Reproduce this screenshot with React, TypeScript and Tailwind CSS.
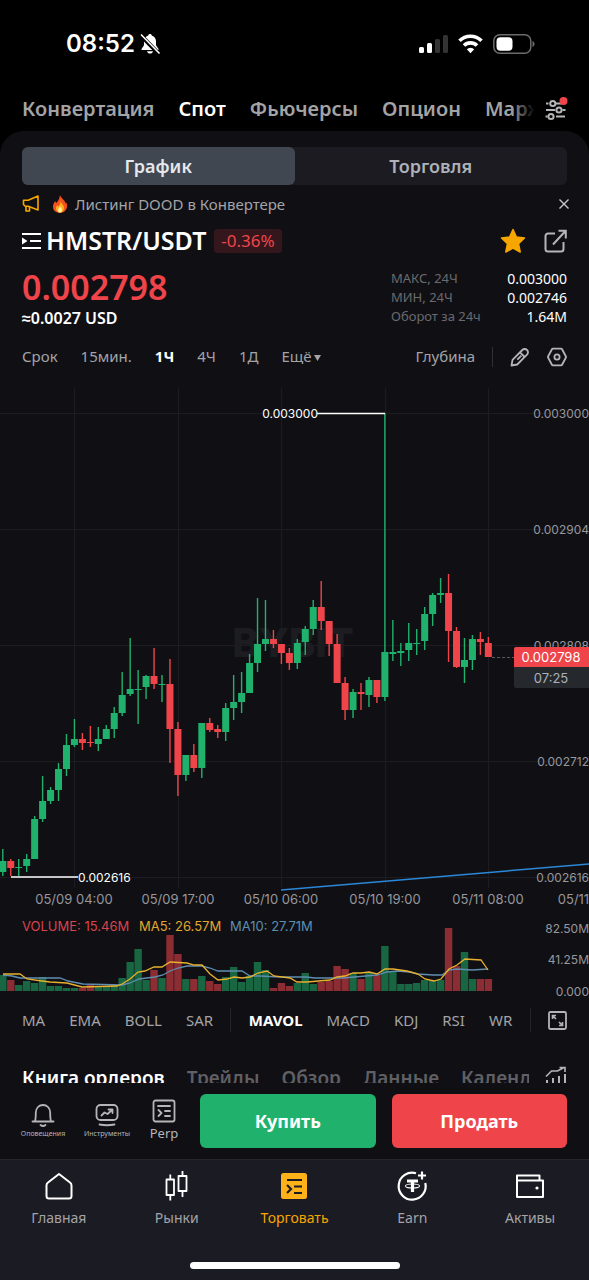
import type { ReactNode } from "react";

type Candle = {
  up: boolean;
  // top and bottom of the body, then top and bottom of the wick
  body: [number, number];
  wick: [number, number];
  volume: number;
};

const c = (side: "g" | "r", top: number, bottom: number, high: number, low: number, volume: number): Candle => ({
  up: side === "g",
  body: [top, bottom],
  wick: [high, low],
  volume,
});

const candles: Candle[] = [
  c("g", 861, 872, 849, 876, 16),
  c("r", 861, 868, 859, 876, 11),
  c("g", 867, 868, 859, 876, 6),
  c("g", 859, 866, 854, 872, 10),
  c("g", 819, 859, 816, 859, 8),
  c("g", 801, 819, 776, 822, 14),
  c("g", 790, 801, 787, 804, 5),
  c("g", 769, 790, 763, 801, 5),
  c("g", 745, 769, 734, 776, 3),
  c("g", 739, 745, 719, 747, 3),
  c("r", 739, 743, 733, 750, 3),
  c("r", 742, 743, 726, 747, 6),
  c("g", 739, 744, 727, 751, 5),
  c("g", 729, 739, 725, 739, 5),
  c("g", 713, 729, 707, 738, 6),
  c("g", 695, 713, 672, 716, 13),
  c("g", 689, 694, 638, 696, 29),
  c("g", 689, 690, 670, 724, 42),
  c("g", 676, 687, 675, 699, 11),
  c("r", 676, 684, 648, 689, 21),
  c("g", 684, 685, 675, 702, 13),
  c("r", 684, 729, 659, 763, 56),
  c("r", 729, 775, 722, 796, 37),
  c("g", 755, 775, 755, 781, 12),
  c("r", 755, 768, 744, 772, 12),
  c("g", 723, 768, 723, 778, 15),
  c("r", 723, 730, 718, 732, 10),
  c("r", 729, 732, 725, 738, 7),
  c("g", 708, 732, 703, 741, 14),
  c("g", 702, 708, 675, 720, 24),
  c("g", 693, 702, 672, 713, 9),
  c("g", 663, 693, 654, 693, 15),
  c("g", 644, 663, 598, 672, 29),
  c("g", 639, 644, 600, 651, 21),
  c("r", 639, 644, 630, 648, 3),
  c("r", 644, 653, 644, 664, 8),
  c("r", 653, 663, 648, 670, 5),
  c("g", 643, 663, 639, 669, 8),
  c("g", 629, 642, 626, 655, 18),
  c("g", 607, 629, 600, 635, 7),
  c("r", 607, 621, 581, 630, 9),
  c("r", 621, 644, 621, 656, 10),
  c("r", 644, 683, 634, 683, 25),
  c("r", 683, 710, 677, 720, 22),
  c("g", 692, 710, 689, 718, 18),
  c("r", 692, 694, 683, 710, 12),
  c("g", 680, 695, 677, 707, 18),
  c("r", 680, 697, 680, 703, 16),
  c("g", 652, 697, 413, 701, 45),
  c("g", 652, 654, 620, 661, 19),
  c("g", 651, 653, 643, 666, 7),
  c("g", 643, 650, 623, 661, 7),
  c("g", 643, 644, 629, 655, 8),
  c("g", 614, 641, 607, 650, 11),
  c("g", 595, 614, 593, 626, 11),
  c("g", 593, 595, 578, 603, 11),
  c("r", 593, 631, 574, 662, 63),
  c("r", 631, 667, 627, 668, 25),
  c("g", 660, 667, 638, 683, 39),
  c("g", 639, 660, 635, 670, 12),
  c("r", 639, 642, 632, 655, 12),
  c("r", 643, 657, 637, 657, 12),
];

const candleX = (index: number) => 2.8 + index * 7.96;

const priceLines = [
  { y: 413, label: "0.003000" },
  { y: 529, label: "0.002904" },
  { y: 645, label: "0.002808" },
  { y: 761, label: "0.002712" },
  { y: 877, label: "0.002616" },
];

const timeLines = [
  { x: 74, label: "05/09 04:00" },
  { x: 178, label: "05/09 17:00" },
  { x: 281, label: "05/10 06:00" },
  { x: 385, label: "05/10 19:00" },
  { x: 488, label: "05/11 08:00" },
];

const ma5 =
  "3,974 20,974 27,979 42,981 50,982 67,983 82,987 117,986 122,984 130,979 138,972 145,971 154,967 162,967 170,962 187,963 194,965 202,965 210,974 218,980 227,979 234,977 242,978 250,977 258,973 267,971 274,976 290,978 297,982 307,982 330,980 337,977 345,976 353,973 361,973 369,972 377,974 385,969 393,969 407,971 418,974 425,979 434,981 441,979 449,969 457,965 465,959 481,960 488,970";
const ma10 =
  "3,975 12,976 20,978 60,978 68,981 83,984 122,985 130,983 139,979 155,977 163,975 170,971 178,968 187,966 202,966 210,968 218,971 242,971 250,976 260,976 280,977 306,977 315,978 343,978 377,975 387,972 397,971 410,972 418,974 433,975 442,975 449,970 457,969 472,970 488,969";

const marketTabs = ["Конвертация", "Спот", "Фьючерсы", "Опцион", "Маржа"];
const intervals = ["Срок", "15мин.", "1Ч", "4Ч", "1Д"];
const overlays = ["MA", "EMA", "BOLL", "SAR"];
const oscillators = ["MAVOL", "MACD", "KDJ", "RSI", "WR"];
const infoTabs = ["Книга ордеров", "Трейды", "Обзор", "Данные", "Календарь"];

const stats = [
  { label: "МАКС, 24Ч", value: "0.003000" },
  { label: "МИН, 24Ч", value: "0.002746" },
  { label: "Оборот за 24ч", value: "1.64M" },
];

function StatusBar() {
  return (
    <div className="flex h-[88px] items-center justify-between pr-[54px] pl-[66px] text-white">
      <div className="flex items-center gap-1 font-['Inter'] text-2xl font-semibold">
        08:52
        <svg width="22" height="22" viewBox="0 0 22 22" fill="currentColor">
          <path d="M11 1c-1 0-1.700.7-1.800 1.500C6.500 3.400 5 5.700 5 8.500v3.800L2.500 16v1h17v-1L17 12.300V8.500c0-2.800-1.500-5.100-4.200-6C12.700 1.700 12 1 11 1z" />
          <path d="M8 18.200h6c-.4 1.500-1.500 2.400-3 2.400s-2.600-.9-3-2.400z" />
          <path d="M2 2.500 19 20" stroke="#000" strokeWidth="4" />
          <path d="M2 1.500 20.500 20.500" stroke="currentColor" strokeWidth="1.600" />
        </svg>
      </div>
      <div className="flex items-center gap-[10px]">
        <svg width="29" height="20" viewBox="0 0 29 20">
          <rect x="0" y="13" width="5" height="6" rx="1.500" fill="#fff" />
          <rect x="8" y="9" width="5" height="10" rx="1.500" fill="#fff" />
          <rect x="16" y="5" width="5" height="14" rx="1.500" fill="#333" />
          <rect x="24" y="1" width="5" height="18" rx="1.500" fill="#333" />
        </svg>
        <svg width="25" height="20" viewBox="0 0 25 20" fill="none" stroke="#fff" strokeWidth="3.600">
          <path d="M1.500 6.800a15.500 15.500 0 0 1 22 0" />
          <path d="M6 11.600a9.200 9.200 0 0 1 13 0" />
          <path d="M12.500 19.200 8.800 15.300a5.300 5.300 0 0 1 7.400 0z" fill="#fff" stroke="none" />
        </svg>
        <svg width="42" height="20" viewBox="0 0 42 20">
          <rect x=".8" y=".8" width="37" height="18.400" rx="6" fill="none" stroke="#6b6b6b" strokeWidth="1.500" />
          <rect x="3.500" y="3.200" width="16" height="13.600" rx="4" fill="#fff" />
          <path d="M39.500 7v6c1.300-.5 2-1.700 2-3s-.7-2.500-2-3z" fill="#6b6b6b" />
        </svg>
      </div>
    </div>
  );
}

function MarketNav() {
  return (
    <nav className="flex h-[43px] items-center pr-[18px] pb-0.5 pl-[22px]">
      <div className="relative flex min-w-0 flex-1 gap-6 overflow-hidden text-xl leading-8 font-semibold text-[#a3a3a6]">
        {marketTabs.map((tab) => (
          <a key={tab} href="#" className={tab === "Спот" ? "text-white" : ""}>
            {tab}
          </a>
        ))}
        <span className="absolute inset-y-0 right-0 w-6 bg-gradient-to-r from-transparent to-black" />
      </div>
      <button type="button" aria-label="Настройки" className="ml-2">
        <svg width="28" height="28" viewBox="0 0 28 28" fill="none" stroke="#b5b5b8" strokeWidth="2">
          <path d="M3 8.500h2.500M13 8.500h6M3 15h9M19.500 15h3M2.500 21.500h2M13 21.500h9M7.500 5h.1" />
          <circle cx="9.800" cy="8.500" r="2.600" />
          <circle cx="16" cy="15" r="2.600" />
          <circle cx="8" cy="21.500" r="2.600" />
          <circle cx="20.500" cy="6" r="4" fill="#ef454a" stroke="none" />
        </svg>
      </button>
    </nav>
  );
}

function PairHeader() {
  return (
    <section className="px-[22px]">
      <div className="flex h-[38px] items-center">
        <svg width="18" height="19" viewBox="0 0 18 19" fill="none" stroke="#f7a600" strokeWidth="1.600" strokeLinejoin="round">
          <path d="M1.500 5.200h4.700L16 1v14l-9.800-3.800H3.200L1.500 9.500z" />
          <path d="M4 11.500V16h3.500v-4" />
        </svg>
        <svg width="16" height="20" viewBox="0 0 16 20" className="ml-3">
          <path d="M8 1c.5 3 5 5 5.700 8.500l.8-1c1.800 5.500-1 10.300-6.500 10.300S.3 15 1.200 11c.4-1.800 1.500-2.800 1.800-4l1.300 2C6 7 7.500 5 8 1z" fill="#f4511e" />
          <path d="M8.500 7.500c1 2 3.500 3.500 3.500 6.500 0 2.700-1.700 4.500-4 4.500S4 16.800 4 14.300c0-1.500.8-2.300 1.300-3l1 1.200c1.300-1.200 2-2.500 2.200-5z" fill="#ffb020" />
          <path d="M8 12.500c1 1 2 2 2 3.500 0 1.600-.8 2.500-2 2.500s-2-.9-2-2.300c0-1.300 1.300-2 2-3.700z" fill="#fff0a0" />
        </svg>
        <p className="ml-[7px] flex-1 text-[15px] text-[#a3a3a8]">Листинг DOOD в Конвертере</p>
        <button type="button" aria-label="Закрыть" className="-mr-0.5">
          <svg width="10" height="10" viewBox="0 0 10 10" stroke="#c8c8cc" strokeWidth="1.400">
            <path d="M.5.500l9 9M9.500.500l-9 9" />
          </svg>
        </button>
      </div>

      <div className="flex h-9 items-center">
        <svg width="20" height="20" viewBox="0 0 20 20" fill="none" stroke="#fff" strokeWidth="2.200">
          <path d="M0 3h19M8 10h11M0 17h19" />
          <path d="M0 6.500v7L5.500 10z" fill="#fff" stroke="none" />
        </svg>
        <h1 className="ml-1 text-[25px] font-semibold text-white">HMSTR/USDT</h1>
        <span className="ml-2 rounded bg-[#34161d] px-[7px] text-[17px] leading-6 text-[#ef454a]">-0.36%</span>
        <div className="ml-auto flex items-center gap-[18px]">
          <button type="button" aria-label="В избранном">
            <svg width="26" height="26" viewBox="0 0 26 26" fill="#f7a600" stroke="#f7a600" strokeWidth="1.500" strokeLinejoin="round">
              <path d="m13 1.500 3.400 7.600 8.100.9-6 5.600 1.700 8.400L13 20l-7.200 4 1.700-8.400-6-5.600 8.100-.9z" />
            </svg>
          </button>
          <button type="button" aria-label="Поделиться">
            <svg width="23" height="24" viewBox="0 0 23 24" fill="none" stroke="#b5b5b8" strokeWidth="2">
              <path d="M11 4.500H4A2.500 2.500 0 0 0 1.500 7v13A2.500 2.500 0 0 0 4 22.500h13a2.500 2.500 0 0 0 2.500-2.500v-7" />
              <path d="M9 15.500 21 2.500M14.500 1.800h7.300v7.700" />
            </svg>
          </button>
        </div>
      </div>

      <div className="mt-2 flex justify-between">
        <div>
          <p className="text-[34px] leading-10 font-semibold text-[#ef454a]">0.002798</p>
          <p className="text-base leading-[22px] font-semibold text-white">≈0.0027 USD</p>
        </div>
        <dl className="w-44 pt-0.5 text-[13px] leading-[19px]">
          {stats.map((stat) => (
            <div key={stat.label} className="flex justify-between">
              <dt className="text-[#6a6a6e]">{stat.label}</dt>
              <dd className="text-sm leading-[19px] text-white">{stat.value}</dd>
            </div>
          ))}
        </dl>
      </div>
    </section>
  );
}

function IntervalBar() {
  return (
    <div className="mt-2 flex h-[39px] items-center gap-[23px] px-[22px] text-[15px] text-[#a3a3a8]">
      {intervals.map((interval) => (
        <button key={interval} type="button" className={interval === "1Ч" ? "font-bold text-white" : ""}>
          {interval}
        </button>
      ))}
      <button type="button" className="flex items-center gap-[3px]">
        Ещё
        <svg width="7" height="6" viewBox="0 0 7 6" fill="currentColor" className="mt-0.5">
          <path d="M0 0h7L3.500 6z" />
        </svg>
      </button>
      <div className="ml-auto flex items-center gap-[17px]">
        <button type="button">Глубина</button>
        <span className="h-5 w-px bg-[#303036]" />
        <button type="button" aria-label="Рисовать">
          <svg width="20" height="20" viewBox="0 0 20 20" fill="none" stroke="#b5b5b8" strokeWidth="1.800" strokeLinejoin="round">
            <path d="M1.500 18.500 2.500 12.800 12.300 3a3.300 3.300 0 0 1 4.700 0 3.300 3.300 0 0 1 0 4.700L7.200 17.500z" />
            <path d="M10 5.300 14.700 10M11.300 8.700l-4 4" />
          </svg>
        </button>
        <button type="button" aria-label="Настройки графика">
          <svg width="20" height="20" viewBox="0 0 20 20" fill="none" stroke="#b5b5b8" strokeWidth="1.800" strokeLinejoin="round">
            <path d="M6 1.700h8q.8 0 1.200.8l3.600 6.700q.4.800 0 1.600l-3.600 6.700q-.4.800-1.200.800H6q-.8 0-1.200-.8L1.200 10.800q-.4-.8 0-1.600l3.600-6.700q.4-.8 1.200-.8z" />
            <circle cx="10" cy="10" r="2.600" />
          </svg>
        </button>
      </div>
    </div>
  );
}

function PriceChart() {
  return (
    <svg viewBox="0 376 589 624" className="block w-full font-['Inter'] text-[13px]">
      <g stroke="#1c1c21">
        {priceLines.map((line) => (
          <path key={line.label} d={`M0 ${line.y + 0.5}H589`} />
        ))}
        {timeLines.map((line) => (
          <path key={line.label} d={`M${line.x + 0.5} 388V888`} />
        ))}
      </g>
      <text x="293" y="657" textAnchor="middle" fill="#1c1c21" className="text-[40px] font-extrabold">
        BYBIT
      </text>

      <g fill="#97979c" textAnchor="end" className="text-xs">
        {priceLines.map((line) => (
          <text key={line.label} x="589" y={line.y + 5}>
            {line.label}
          </text>
        ))}
        <text x="589" y="933">82.50M</text>
        <text x="589" y="964">41.25M</text>
        <text x="589" y="996">0.000</text>
      </g>

      {candles.map((candle, i) => {
        const x = candleX(i);
        return (
          <g key={i} fill={candle.up ? "#20b26c" : "#ef454a"}>
            <rect x={x - 0.7} y={candle.wick[0]} width="1.400" height={candle.wick[1] - candle.wick[0]} />
            <rect x={x - 3.5} y={candle.body[0]} width="7" height={candle.body[1] - candle.body[0]} />
            <rect x={x - 3.7} y={991 - candle.volume} width="7.400" height={candle.volume} fill={candle.up ? "#196742" : "#8b2d33"} />
          </g>
        );
      })}

      <path d="M317 413.500h68M11 877h67" stroke="#fff" strokeWidth="1.500" />
      <g fill="#fff" className="text-xs">
        <text x="318" y="418" textAnchor="end">0.003000</text>
        <text x="78" y="882">0.002616</text>
      </g>
      <path d="M281 890 589 864" stroke="#2b87d8" strokeWidth="1.500" />

      <path d="M492 657.500h22" stroke="#5a5a5f" strokeDasharray="3 2" />
      <path d="M514 649q0-2 2-2h73v20h-75z" fill="#ef454a" />
      <path d="M514 667h75v21h-73q-2 0-2-2z" fill="#25282c" />
      <g textAnchor="middle">
        <text x="551" y="662" fill="#fff">0.002798</text>
        <text x="551" y="683" fill="#adb1b8">07:25</text>
      </g>

      <g fill="#97979c" textAnchor="middle">
        {timeLines.map((line) => (
          <text key={line.label} x={line.x} y="904">
            {line.label}
          </text>
        ))}
        <text x="592" y="904">05/11 21:00</text>
      </g>

      <text x="22" y="931" fill="#d8434c">VOLUME: 15.46M</text>
      <text x="139" y="931" fill="#e0a82e">MA5: 26.57M</text>
      <text x="230" y="931" fill="#5b8fb0">MA10: 27.71M</text>
      <polyline points={ma10} fill="none" stroke="#5f8db0" strokeWidth="1.300" />
      <polyline points={ma5} fill="none" stroke="#e8b02e" strokeWidth="1.300" />
    </svg>
  );
}

function IndicatorBar() {
  return (
    <div className="flex h-10 items-center justify-between px-[22px] text-[15px] text-[#a3a3a8]">
      <div className="flex gap-6">
        {overlays.map((name) => (
          <button key={name} type="button">
            {name}
          </button>
        ))}
      </div>
      <span className="h-6 w-px bg-[#24242a]" />
      <div className="flex gap-6">
        {oscillators.map((name) => (
          <button key={name} type="button" className={name === "MAVOL" ? "font-bold text-white" : ""}>
            {name}
          </button>
        ))}
      </div>
      <span className="h-6 w-px bg-[#24242a]" />
      <button type="button" aria-label="На весь экран">
        <svg width="19" height="19" viewBox="0 0 19 19" fill="none" stroke="#b5b5b8" strokeWidth="1.800">
          <rect x="1" y="1" width="17" height="17" rx="1.500" />
          <path d="M4.500 8V4.500H8M4.500 4.500 8 8M14.500 11v3.500H11M14.500 14.500 11 11" strokeWidth="1.600" />
        </svg>
      </button>
    </div>
  );
}

function InfoTabs() {
  return (
    <div className="mt-5 flex h-[23px] items-start overflow-hidden px-[22px]">
      <div className="flex min-w-0 flex-1 gap-[22px] overflow-hidden text-[19px] leading-9 font-semibold whitespace-nowrap text-[#5f5f64]">
        {infoTabs.map((tab, i) => (
          <a key={tab} href="#" className={i === 0 ? "text-white" : ""}>
            {tab}
          </a>
        ))}
      </div>
      <svg width="22" height="17" viewBox="0 0 22 17" fill="none" stroke="#b5b5b8" strokeWidth="2" className="mt-[6px] ml-4">
        <path d="M1 10.500 6.500 5h6L19 1.500M14.500 1.500H20V6" strokeWidth="1.600" />
        <path d="M2 14v3M8 12v5M14 10v7M20 8v9" />
      </svg>
    </div>
  );
}

function Shortcut({ label, className, children }: { label: string; className: string; children: ReactNode }) {
  return (
    <button type="button" className={`flex flex-col items-center text-[#b5b5b8] ${className}`}>
      <svg width="24" height="24" viewBox="0 0 24 24" fill="none" stroke="currentColor" strokeWidth="1.800" strokeLinecap="round" strokeLinejoin="round">
        {children}
      </svg>
      {label}
    </button>
  );
}

function TradeBar() {
  return (
    <div className="mt-[11px] flex h-[54px] items-center gap-4 px-[22px]">
      <div className="mr-[6px] flex gap-[22px]">
        <Shortcut label="Оповещения" className="w-[42px] pt-1 text-[7px] leading-[14px]">
          <path d="M1.500 18.500h21M4 18c.8-2 .8-4 .8-8.500C5 5 8 2 12 2s7 3 7.200 7.500c0 4.500 0 6.500.8 8.500M9.500 22q2.500 2 5 0" />
        </Shortcut>
        <Shortcut label="Инструменты" className="w-[42px] pt-1 text-[7px] leading-[14px]">
          <rect x="1.500" y="2" width="21" height="15" rx="4" />
          <path d="m6.500 12.500 3-3 3 1.500 4.500-4M13.500 6.500h4v3.500M4.500 21.500q7.500 1.500 15 0" />
        </Shortcut>
        <Shortcut label="Perp" className="w-7 text-[13px] leading-5">
          <rect x="1.500" y="1.500" width="21" height="21" rx="2" />
          <path d="M6 7h12M6.500 11l3 3-3 3M13 12h5M13 17h5" />
        </Shortcut>
      </div>
      <button type="button" className="h-full flex-1 rounded-md bg-[#20b26c] text-lg font-bold text-white">
        Купить
      </button>
      <button type="button" className="h-full flex-1 rounded-md bg-[#ef454a] text-lg font-bold text-white">
        Продать
      </button>
    </div>
  );
}

function NavItem({ label, active, children }: { label: string; active?: boolean; children: ReactNode }) {
  return (
    <a href="#" className={`flex flex-col items-center gap-1 text-sm leading-6 ${active ? "text-[#f7a600]" : "text-[#a3a3a8]"}`}>
      <svg width="32" height="32" viewBox="0 0 32 32" fill="none" stroke="#fff" strokeWidth="2" strokeLinejoin="round">
        {children}
      </svg>
      {label}
    </a>
  );
}

function BottomNav() {
  return (
    <footer className="mt-[11px] border-t border-[#26262d] bg-[#1b1b23]">
      <nav className="grid grid-cols-5 pt-[10px]">
        <NavItem label="Главная">
          <path d="M5 12.500q-1.500 1-1.500 3V26q0 2.500 2.500 2.500h20q2.500 0 2.500-2.500V15.500q0-2-1.500-3L16 4z" />
        </NavItem>
        <NavItem label="Рынки">
          <path d="M5.500 9.500h7.500v15.500H5.500zM17.500 6H25.500v15h-8zM9.300 4.500v5M9.300 25v5.500M21.500 1v5M21.500 21v6" strokeWidth="1.800" />
        </NavItem>
        <NavItem label="Торговать" active>
          <rect x="3" y="3" width="26" height="26" rx="2.500" fill="#ffb11a" stroke="none" />
          <path d="M9 10h15M9 15l4 4-4 4M16 16.500h8M16 23h8" stroke="#1b1b23" strokeWidth="2.200" strokeLinejoin="miter" />
        </NavItem>
        <NavItem label="Earn">
          <path d="M20 3.200A13.500 13.500 0 1 0 29.300 13M26 1.500v8M22 5.500h8" strokeWidth="2.200" />
          <path d="M11 11h11M16.500 11v11" strokeWidth="3.200" />
          <ellipse cx="16.500" cy="16" rx="7" ry="2" strokeWidth="1.100" />
        </NavItem>
        <NavItem label="Активы">
          <path d="M3 9.500V27h26V10.500H3M3 10.500V5.500h22.500v5" />
          <circle cx="23" cy="18" r="1.600" fill="#fff" stroke="none" />
        </NavItem>
      </nav>
      <div className="flex justify-center pt-8 pb-[11px]">
        <span className="h-[7px] w-[210px] rounded-full bg-white" />
      </div>
    </footer>
  );
}

export default function App() {
  return (
    <div className="min-h-screen bg-black font-['Noto_Sans',sans-serif]">
      <StatusBar />
      <MarketNav />
      <main className="rounded-t-3xl bg-[#101014] pt-4">
        <div className="mx-[22px] grid h-[38px] grid-cols-2 rounded-md bg-[#1b1b21] text-lg font-semibold">
          <button type="button" className="rounded-md bg-[#404751] text-[#e4e7ec]">
            График
          </button>
          <button type="button" className="text-[#adb1b8]">
            Торговля
          </button>
        </div>
        <PairHeader />
        <IntervalBar />
        <PriceChart />
        <IndicatorBar />
        <InfoTabs />
        <TradeBar />
        <BottomNav />
      </main>
    </div>
  );
}
